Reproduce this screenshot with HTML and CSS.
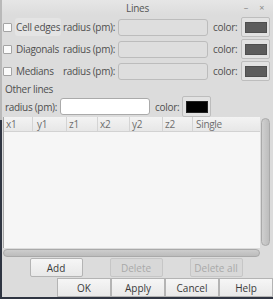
FILE: index.html
```html
<!DOCTYPE html>
<html lang="en">
<head>
  <meta charset="UTF-8" />
  <title>Lines</title>
  <link rel="stylesheet" href="styles.css">
</head>
<body>

  <div class="dialog">
    <div class="titlebar">
      <span class="title">Lines</span>
      <span class="wbtn min">–</span>
      <span class="wbtn close">×</span>
    </div>

    <div class="lines">
      <label class="check hover"><span class="box"></span><span class="name">Cell edges</span></label>
      <span class="lbl">radius (pm):</span>
      <span class="entry off"></span>
      <span class="lbl color">color:</span>
      <span class="colorbtn"><span class="swatch gray"></span></span>

      <label class="check"><span class="box"></span><span class="name">Diagonals</span></label>
      <span class="lbl">radius (pm):</span>
      <span class="entry off"></span>
      <span class="lbl color">color:</span>
      <span class="colorbtn"><span class="swatch gray"></span></span>

      <label class="check"><span class="box"></span><span class="name">Medians</span></label>
      <span class="lbl">radius (pm):</span>
      <span class="entry off"></span>
      <span class="lbl color">color:</span>
      <span class="colorbtn"><span class="swatch gray"></span></span>
    </div>

    <div class="section">Other lines</div>
    <div class="other">
      <span class="lbl">radius (pm):</span>
      <span class="entry on"></span>
      <span class="lbl color">color:</span>
      <span class="colorbtn"><span class="swatch black"></span></span>
    </div>

    <div class="tree">
      <div class="tree-main">
        <div class="head">
          <span class="col c1">x1</span>
          <span class="col c2">y1</span>
          <span class="col c3">z1</span>
          <span class="col c4">x2</span>
          <span class="col c5">y2</span>
          <span class="col c6">z2</span>
          <span class="col c7">Single</span>
        </div>
        <div class="rows"></div>
      </div>
      <div class="vscroll"><div class="thumb"></div></div>
      <div class="hscroll"><div class="thumb"></div></div>
    </div>

    <div class="actions">
      <button class="btn">Add</button>
      <button class="btn" disabled>Delete</button>
      <button class="btn" disabled>Delete all</button>
    </div>

    <div class="footer">
      <button class="btn">OK</button>
      <button class="btn">Apply</button>
      <button class="btn">Cancel</button>
      <button class="btn">Help</button>
    </div>
  </div>

</body>
</html>
```

FILE: styles.css
```css
* {
  box-sizing: border-box;
}
body {
  margin: 0;
  width: 273px;
  height: 299px;
  overflow: hidden;
  font-family: 'Open Sans', sans-serif;
  font-size: 10px;
  letter-spacing: -0.3px;
  white-space: nowrap;
  color: #4f4f4f;
  background: linear-gradient(#b9b9b9 0 120px, #2f3542 120px);
}
.dialog {
  margin-left: 2px;
  width: 271px;
  height: 297px;
  background: #dcdcdc;
  display: flex;
  flex-direction: column;
}
.titlebar {
  height: 15px;
  position: relative;
  background: linear-gradient(#e6e6e6, #dcdcdc);
  text-align: center;
  line-height: 17px;
  color: #555;
}
.wbtn {
  position: absolute;
  top: 0;
  line-height: 15px;
  color: #8a8a8a;
  font-size: 9px;
}
.wbtn.min { right: 25px; }
.wbtn.close { right: 9px; }

.lines {
  display: grid;
  grid-template-columns: 61px 55px 90px 33px 29px;
  grid-auto-rows: 20px;
  row-gap: 2px;
  align-items: center;
  margin-top: 2px;
}
.check {
  display: flex;
  align-items: center;
  height: 100%;
}
.box {
  width: 9px;
  height: 9px;
  margin: 0 3px 0 1px;
  background: #fbfbfb;
  border: 1px solid #a4a4a4;
  border-radius: 1px;
}
.name {
  padding: 2px 1px;
}
.check.hover .name {
  background: #e4e4e4;
  border-radius: 3px;
}
.lbl.color {
  padding-left: 5px;
}
.entry {
  display: block;
  height: 17px;
  border: 1px solid #bcbcbc;
  border-radius: 3px;
}
.entry.off {
  background: #dedede;
}
.entry.on {
  width: 90px;
  background: #fff;
  border-color: #aaa;
}
.colorbtn {
  display: flex;
  align-items: center;
  justify-content: center;
  height: 20px;
  width: 29px;
  background: #e2e2e2;
  border: 1px solid #bdbdbd;
  border-radius: 2px;
}
.swatch {
  width: 22px;
  height: 11px;
}
.swatch.gray {
  background: #5c5c5c;
  border: 1px solid #4e4e4e;
}
.swatch.black {
  background: #000;
  border: 1px solid #222;
  height: 12px;
}

.section {
  padding: 2px 0 0 3px;
  height: 15px;
  line-height: 13px;
}
.other {
  display: flex;
  align-items: center;
  height: 21px;
  padding-left: 3px;
}
.other .entry {
  margin-left: 3px;
}
.other .colorbtn {
  height: 21px;
  margin-left: 3px;
}

.tree {
  display: grid;
  grid-template-columns: 257px 10px;
  grid-template-rows: 131px 9px;
  margin-left: 1px;
  height: 141px;
}
.tree-main {
  display: flex;
  flex-direction: column;
  background: #f6f6f6;
  border-left: 1px solid #a6a6a6;
}
.head {
  display: flex;
  height: 15px;
  background: linear-gradient(#f3f3f3, #e7e7e7);
  border-bottom: 1px solid #d2d2d2;
  color: #6e6e6e;
  line-height: 15px;
}
.col {
  padding-left: 2px;
  border-right: 1px solid #d4d4d4;
}
.c1 { width: 29px; }
.c2 { width: 34px; padding-left: 4px; }
.c3 { width: 31px; }
.c4 { width: 32px; }
.c5 { width: 33px; }
.c6 { width: 30px; }
.c7 { flex: 1; border-right: none; padding-left: 3px; }
.rows {
  flex: 1;
}
.vscroll {
  padding: 1px 0 0 1px;
  background: #dcdcdc;
}
.vscroll .thumb {
  height: 128px;
  width: 9px;
  background: linear-gradient(90deg, #cfcfcf, #bdbdbd);
  border: 1px solid #a9a9a9;
  border-radius: 5px;
}
.hscroll {
  padding: 1px 0 0 0;
}
.hscroll .thumb {
  height: 8px;
  background: linear-gradient(#cdcdcd, #bcbcbc);
  border: 1px solid #a9a9a9;
  border-radius: 4px;
}

.btn {
  font: inherit;
  color: #3a3a3a;
  height: 19px;
  padding: 0;
  background: linear-gradient(#f6f6f6, #e8e8e8);
  border: 1px solid #b4b4b4;
  border-radius: 2px;
}
.btn:disabled {
  color: #a9a9a9;
  background: #d8d8d8;
  border-color: #c6c6c6;
}
.actions {
  display: grid;
  grid-template-columns: repeat(3, 80px);
  justify-items: center;
  padding: 1px 0 0 14px;
  height: 21px;
}
.actions .btn {
  width: 53px;
  height: 19px;
}
.footer {
  display: flex;
  justify-content: flex-end;
  margin-top: 1px;
}
.footer .btn {
  width: 54px;
  height: 19px;
  border-radius: 0;
}
```
